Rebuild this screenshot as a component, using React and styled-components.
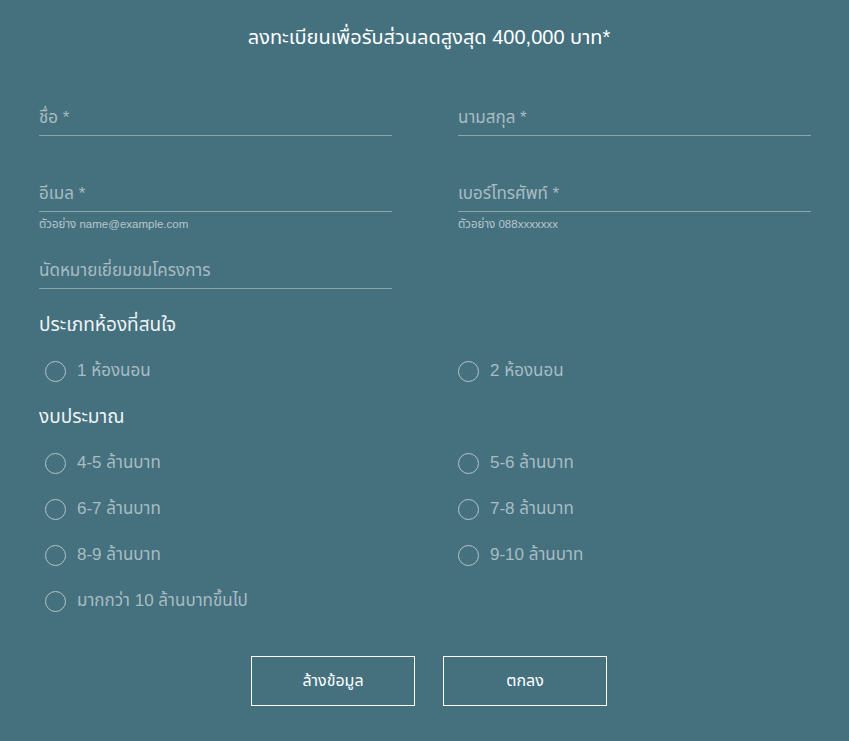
import React from "react";
import styled, { createGlobalStyle } from "styled-components";

const GlobalStyle = createGlobalStyle`
    html, body {
        margin: 0;
        padding: 0;
        background-color: #45717f;
    }
    body {
        font-family: "Liberation Sans", "Noto Sans Thai", "Noto Sans", sans-serif;
    }
`;

const rooms = ["1 ห้องนอน", "2 ห้องนอน"];
const budgets = [
    "4-5 ล้านบาท",
    "5-6 ล้านบาท",
    "6-7 ล้านบาท",
    "7-8 ล้านบาท",
    "8-9 ล้านบาท",
    "9-10 ล้านบาท",
    "มากกว่า 10 ล้านบาทขึ้นไป",
];

const App = () => {
    return (
        <Page>
            <GlobalStyle />
            <Title>ลงทะเบียนเพื่อรับส่วนลดสูงสุด 400,000 บาท*</Title>

            <FieldGrid>
                <Field space={46}>
                    <Label>ชื่อ *</Label>
                </Field>
                <Field space={46}>
                    <Label>นามสกุล *</Label>
                </Field>
                <Field space={27}>
                    <Label>อีเมล *</Label>
                    <Hint>ตัวอย่าง name@example.com</Hint>
                </Field>
                <Field space={27}>
                    <Label>เบอร์โทรศัพท์ *</Label>
                    <Hint>ตัวอย่าง 088xxxxxxx</Hint>
                </Field>
                <Field space={24}>
                    <Label>นัดหมายเยี่ยมชมโครงการ</Label>
                </Field>
            </FieldGrid>

            <Section>ประเภทห้องที่สนใจ</Section>
            <RadioGrid>
                {rooms.map((r) => (
                    <RadioRow key={r}>
                        <Circle />
                        <RadioText>{r}</RadioText>
                    </RadioRow>
                ))}
            </RadioGrid>

            <Section>งบประมาณ</Section>
            <RadioGrid>
                {budgets.map((b) => (
                    <RadioRow key={b}>
                        <Circle />
                        <RadioText>{b}</RadioText>
                    </RadioRow>
                ))}
            </RadioGrid>

            <Buttons>
                <Button>ล้างข้อมูล</Button>
                <Button>ตกลง</Button>
            </Buttons>
        </Page>
    );
};

const Page = styled.div`
    width: 849px;
    height: 741px;
    box-sizing: border-box;
    padding: 24px 39px 0 39px;
    background-color: #45717f;
`;

const Title = styled.h1`
    margin: 0;
    padding-left: 9px;
    text-align: center;
    color: #ffffff;
    font-size: 20px;
    font-weight: 400;
    line-height: 26px;
`;

const FieldGrid = styled.div`
    display: grid;
    grid-template-columns: 353px 353px;
    column-gap: 66px;
    align-items: start;
    margin-top: 56px;
`;

const Field = styled.div`
    margin-bottom: ${(p) => p.space}px;
`;

const Label = styled.div`
    color: #a8bcc3;
    font-size: 17px;
    line-height: 24px;
    padding: 0 0 5px 0;
    border-bottom: 1px solid #8aa5ae;
`;

const Hint = styled.div`
    color: #b6c7cd;
    font-size: 11.5px;
    line-height: 16px;
    margin-top: 4px;
`;

const Section = styled.div`
    color: #eef3f5;
    font-size: 19px;
    line-height: 24px;
    height: 35px;
`;

const RadioGrid = styled.div`
    display: grid;
    grid-template-columns: 413px 1fr;
    margin-bottom: 11px;
`;

const RadioRow = styled.div`
    display: flex;
    align-items: center;
    gap: 11px;
    height: 46px;
    padding-left: 6px;
`;

const Circle = styled.span`
    width: 19px;
    height: 19px;
    border: 1.5px solid #b3c4ca;
    border-radius: 50%;
    flex-shrink: 0;
`;

const RadioText = styled.span`
    color: #a8bcc3;
    font-size: 17px;
`;

const Buttons = styled.div`
    display: flex;
    justify-content: center;
    gap: 28px;
    margin-top: 32px;
    padding-left: 9px;
`;

const Button = styled.button`
    width: 164px;
    height: 50px;
    background: transparent;
    border: 1px solid #ffffff;
    color: #ffffff;
    font-family: inherit;
    font-size: 16px;
    cursor: pointer;
`;

export default App;
